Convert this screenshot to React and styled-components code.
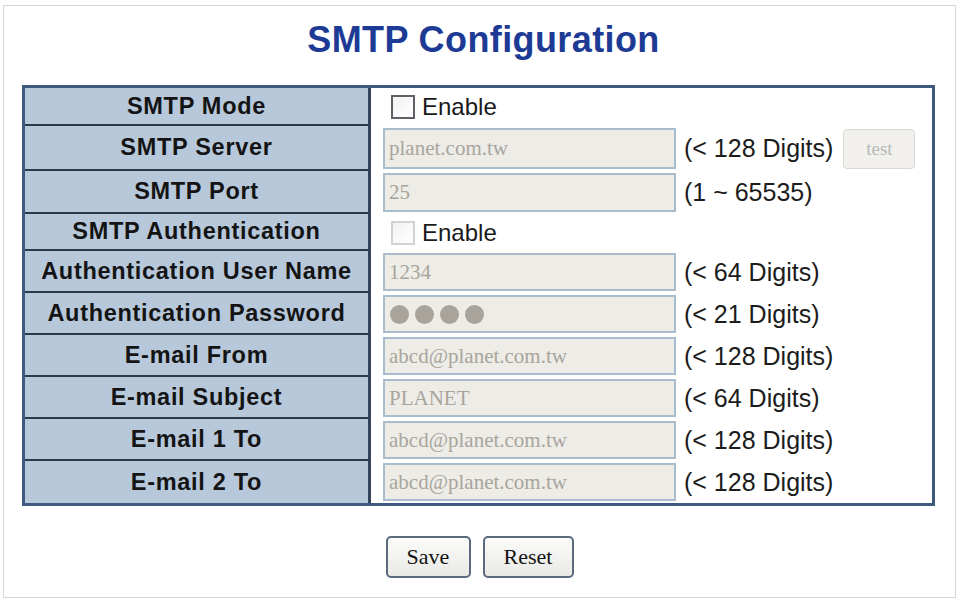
import React from "react";
import styled, { createGlobalStyle } from "styled-components";

const GlobalStyle = createGlobalStyle`
  body {
    margin: 0;
    background: #ffffff;
    font-family: "Liberation Sans", Arial, sans-serif;
  }
`;

const rows = [
  { label: "SMTP Mode", h: 38, kind: "check", checkStrong: true },
  { label: "SMTP Server", h: 45, kind: "text", value: "planet.com.tw", hint: "(< 128 Digits)", test: true },
  { label: "SMTP Port", h: 43, kind: "text", value: "25", hint: "(1 ~ 65535)" },
  { label: "SMTP Authentication", h: 37, kind: "check" },
  { label: "Authentication User Name", h: 42, kind: "text", value: "1234", hint: "(< 64 Digits)" },
  { label: "Authentication Password", h: 42, kind: "password", hint: "(< 21 Digits)" },
  { label: "E-mail From", h: 42, kind: "text", value: "abcd@planet.com.tw", hint: "(< 128 Digits)" },
  { label: "E-mail Subject", h: 42, kind: "text", value: "PLANET", hint: "(< 64 Digits)" },
  { label: "E-mail 1 To", h: 42, kind: "text", value: "abcd@planet.com.tw", hint: "(< 128 Digits)" },
  { label: "E-mail 2 To", h: 42, kind: "text", value: "abcd@planet.com.tw", hint: "(< 128 Digits)" },
];

const App = () => {
  return (
    <>
      <GlobalStyle />
      <Frame>
        <Title>SMTP Configuration</Title>
        <Table>
          {rows.map((row, i) => (
            <Row key={row.label} h={row.h}>
              <Label last={i === rows.length - 1}>{row.label}</Label>
              <Value>
                {row.kind === "check" && (
                  <CheckWrap>
                    <CheckBox strong={row.checkStrong} />
                    <CheckText>Enable</CheckText>
                  </CheckWrap>
                )}
                {row.kind === "text" && (
                  <Field readOnly value={row.value} h={row.h} />
                )}
                {row.kind === "password" && (
                  <FakeField h={row.h}>
                    <Dot />
                    <Dot />
                    <Dot />
                    <Dot />
                  </FakeField>
                )}
                {row.hint && <Hint>{row.hint}</Hint>}
                {row.test && <TestButton disabled>test</TestButton>}
              </Value>
            </Row>
          ))}
        </Table>
        <Buttons>
          <Button w={85}>Save</Button>
          <Button w={91}>Reset</Button>
        </Buttons>
      </Frame>
    </>
  );
};

const Frame = styled.div`
  box-sizing: border-box;
  margin: 5px 0 0 3px;
  width: 953px;
  height: 593px;
  border: 1px solid #d6d6d6;
  padding: 12px 20px 0 18px;
  display: flex;
  flex-direction: column;
  align-items: stretch;
`;

const Title = styled.h1`
  margin: 0;
  height: 44px;
  line-height: 44px;
  text-align: center;
  font-family: "Liberation Sans", Arial, sans-serif;
  font-weight: bold;
  font-size: 36px;
  letter-spacing: 0.4px;
  color: #1d3b95;
  padding-left: 10px;
`;

const Table = styled.div`
  margin-top: 23px;
  border: 3px solid #3e5a7e;
  display: flex;
  flex-direction: column;
  background: #ffffff;
`;

const Row = styled.div`
  display: flex;
  height: ${(p) => p.h}px;
`;

const Label = styled.div`
  box-sizing: border-box;
  width: 346px;
  flex-shrink: 0;
  background: #b7c8da;
  border-right: 3px solid #33455c;
  border-bottom: ${(p) => (p.last ? "none" : "2px solid #2c3a4c")};
  display: flex;
  align-items: center;
  justify-content: center;
  font-family: "Liberation Sans", Arial, sans-serif;
  font-weight: bold;
  font-size: 23.5px;
  letter-spacing: 0.7px;
  color: #141414;
`;

const Value = styled.div`
  flex: 1;
  display: flex;
  align-items: center;
  padding-left: 12px;
`;

const CheckWrap = styled.label`
  display: flex;
  align-items: center;
  gap: 7px;
  padding-left: 8px;
`;

const CheckBox = styled.span`
  box-sizing: border-box;
  width: 24px;
  height: 24px;
  border: 2px solid ${(p) => (p.strong ? "#5e6266" : "#d2d2d2")};
  background: linear-gradient(135deg, #f2f2f2, #ffffff);
`;

const CheckText = styled.span`
  font-family: "Liberation Sans", Arial, sans-serif;
  font-size: 24px;
  color: #1a1a1a;
`;

const Field = styled.input`
  box-sizing: border-box;
  width: 293px;
  height: ${(p) => p.h - 4}px;
  margin: 0;
  padding: 0 4px;
  border: 2px solid #a9bccd;
  background: #edece7;
  font-family: "Liberation Serif", "Times New Roman", serif;
  font-size: 21px;
  color: #a9a59d;
  outline: none;
`;

const FakeField = styled.div`
  box-sizing: border-box;
  width: 293px;
  height: ${(p) => p.h - 4}px;
  padding: 0 5px;
  border: 2px solid #a9bccd;
  background: #edece7;
  display: flex;
  align-items: center;
  gap: 6px;
`;

const Dot = styled.span`
  width: 19px;
  height: 19px;
  border-radius: 50%;
  background: #a8a49c;
`;

const Hint = styled.span`
  margin-left: 8px;
  font-family: "Liberation Sans", Arial, sans-serif;
  font-size: 25px;
  color: #1c1c1c;
  white-space: nowrap;
`;

const TestButton = styled.button`
  box-sizing: border-box;
  margin-left: 10px;
  width: 72px;
  height: 40px;
  border: 1px solid #d8d8d4;
  border-radius: 4px;
  background: #f1f0ed;
  font-family: "Liberation Serif", "Times New Roman", serif;
  font-size: 19px;
  color: #b8b8b6;
`;

const Buttons = styled.div`
  margin-top: 30px;
  display: flex;
  justify-content: center;
  gap: 12px;
  padding-left: 2px;
`;

const Button = styled.button`
  box-sizing: border-box;
  width: ${(p) => p.w}px;
  height: 42px;
  border: 2px solid #5b6b7d;
  border-radius: 5px;
  background: linear-gradient(#fbfbfa, #e9e9e6);
  font-family: "Liberation Serif", "Times New Roman", serif;
  font-size: 22px;
  color: #141414;
  padding: 0;
`;

export default App;
